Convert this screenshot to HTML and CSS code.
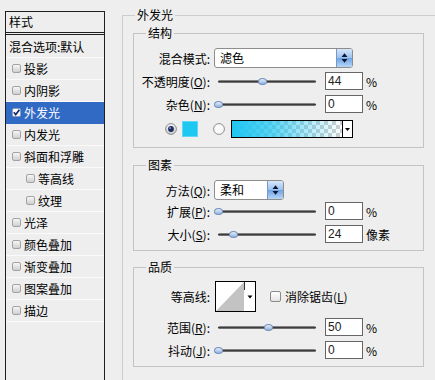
FILE: index.html
```html
<!DOCTYPE html>
<html lang="zh-CN">
<head>
<meta charset="utf-8">
<title>图层样式 - 外发光</title>
<link rel="stylesheet" href="styles.css">
</head>
<body>
<div class="dialog">
  <div class="styles-list">
    <div class="list-head">样式</div>
    <div class="list-row blend">混合选项:默认</div>
    <div class="list-row"><span class="cb"></span>投影</div>
    <div class="list-row"><span class="cb"></span>内阴影</div>
    <div class="list-row sel"><span class="cb checked"><svg width="7" height="7" viewBox="0 0 7 7"><path d="M0.8 3.2 L2.7 5.6 L6.4 0.8" fill="none" stroke="#1b2d6b" stroke-width="1.7"/></svg></span>外发光</div>
    <div class="list-row"><span class="cb"></span>内发光</div>
    <div class="list-row"><span class="cb"></span>斜面和浮雕</div>
    <div class="list-row sub"><span class="cb"></span>等高线</div>
    <div class="list-row sub"><span class="cb"></span>纹理</div>
    <div class="list-row"><span class="cb"></span>光泽</div>
    <div class="list-row"><span class="cb"></span>颜色叠加</div>
    <div class="list-row"><span class="cb"></span>渐变叠加</div>
    <div class="list-row"><span class="cb"></span>图案叠加</div>
    <div class="list-row"><span class="cb"></span>描边</div>
  </div>

  <fieldset class="outer">
    <legend>外发光</legend>

    <fieldset class="inner struct">
      <legend>结构</legend>
      <div class="row h20">
        <span class="lbl">混合模式:</span>
        <div class="select wide"><span class="val">滤色</span><span class="spin"><svg width="7" height="12" viewBox="0 0 7 12"><path d="M0.5 5 L3.5 1.2 L6.5 5Z M0.5 7 L3.5 10.8 L6.5 7Z" fill="#0d1733"/></svg></span></div>
      </div>
      <div class="row mt4">
        <span class="lbl">不透明度(<u>O</u>):</span>
        <div class="slider"><div class="track"><span class="thumb" style="left:45%"></span></div></div>
        <span class="num">44</span><span class="unit">%</span>
      </div>
      <div class="row mt5">
        <span class="lbl">杂色(<u>N</u>):</span>
        <div class="slider"><div class="track"><span class="thumb" style="left:0%"></span></div></div>
        <span class="num">0</span><span class="unit">%</span>
      </div>
      <div class="row mt7 colors">
        <span class="radio"><svg width="12" height="12" viewBox="0 0 12 12"><defs><linearGradient id="rg" x1="0" y1="0" x2="0" y2="1"><stop offset="0" stop-color="#f6f6f6"/><stop offset="1" stop-color="#c9c9c9"/></linearGradient></defs><circle cx="6" cy="6" r="5.4" fill="url(#rg)" stroke="#8d8d8d"/><circle cx="6" cy="6" r="2.9" fill="#1c2b5e"/><circle cx="5.2" cy="5.1" r="1" fill="#7f93c4"/></svg></span>
        <span class="swatch"></span>
        <span class="radio r2"><svg width="12" height="12" viewBox="0 0 12 12"><circle cx="6" cy="6" r="5.4" fill="#fafafa" stroke="#8d8d8d"/></svg></span>
        <div class="gradient"><span class="gbar"></span><span class="garrow"><svg width="5" height="3" viewBox="0 0 5 3"><path d="M0 0H5L2.5 3Z" fill="#000"/></svg></span></div>
      </div>
    </fieldset>

    <fieldset class="inner elements">
      <legend>图素</legend>
      <div class="row h20">
        <span class="lbl">方法(<u>Q</u>):</span>
        <div class="select narrow"><span class="val">柔和</span><span class="spin"><svg width="7" height="12" viewBox="0 0 7 12"><path d="M0.5 5 L3.5 1.2 L6.5 5Z M0.5 7 L3.5 10.8 L6.5 7Z" fill="#0d1733"/></svg></span></div>
      </div>
      <div class="row mt2">
        <span class="lbl">扩展(<u>P</u>):</span>
        <div class="slider"><div class="track"><span class="thumb" style="left:0%"></span></div></div>
        <span class="num">0</span><span class="unit">%</span>
      </div>
      <div class="row mt5">
        <span class="lbl">大小(<u>S</u>):</span>
        <div class="slider"><div class="track"><span class="thumb" style="left:15%"></span></div></div>
        <span class="num">24</span><span class="unit">像素</span>
      </div>
    </fieldset>

    <fieldset class="inner quality">
      <legend>品质</legend>
      <div class="row h31">
        <span class="lbl">等高线:</span>
        <div class="contour"><svg width="39" height="29" viewBox="0 0 39 29"><rect width="39" height="29" fill="#fff"/><polygon points="0,29 28,0 28,29" fill="#c3c3c3"/><line x1="28.5" y1="0" x2="28.5" y2="8" stroke="#333" stroke-width="1"/><path d="M31.5 13.5 H36.5 L34 16.5Z" fill="#000"/></svg></div>
        <span class="check"></span>
        <span class="check-label">消除锯齿(<u>L</u>)</span>
      </div>
      <div class="row mt6">
        <span class="lbl">范围(<u>R</u>):</span>
        <div class="slider"><div class="track"><span class="thumb" style="left:51%"></span></div></div>
        <span class="num">50</span><span class="unit">%</span>
      </div>
      <div class="row mt5">
        <span class="lbl">抖动(<u>J</u>):</span>
        <div class="slider"><div class="track"><span class="thumb" style="left:0%"></span></div></div>
        <span class="num">0</span><span class="unit">%</span>
      </div>
    </fieldset>
  </fieldset>
</div>
</body>
</html>
```

FILE: styles.css
```css
* { box-sizing: border-box; }
html, body { margin: 0; padding: 0; }
body {
  width: 435px;
  height: 380px;
  overflow: hidden;
  background: #eeeeee;
  font-family: "Noto Sans CJK SC", "Noto Sans", sans-serif;
  font-size: 12px;
  color: #000;
}
u { text-decoration: underline; text-underline-offset: 1px; }

.dialog {
  display: flex;
  align-items: flex-start;
  height: 380px;
  padding-left: 5px;
}

/* ---------- left styles list ---------- */
.styles-list {
  flex: none;
  margin-top: 11px;
  width: 100px;
  height: 369px;
  border: 1px solid #1e1e1e;
  border-bottom: 0;
}
.list-head {
  height: 23px;
  line-height: 20px;
  padding-left: 3px;
  border-bottom: 3px double #1e1e1e;
}
.list-row {
  height: 22px;
  display: flex;
  align-items: center;
  padding-left: 6px;
  border-bottom: 1px solid #fafafa;
  white-space: nowrap;
}
.list-row.blend { height: 23px; padding-left: 3px; }
.list-row.sub { padding-left: 20px; }
.list-row.sel { background: #316ac5; color: #fff; border-bottom-color: #316ac5; }
.cb {
  flex: none;
  width: 9px;
  height: 9px;
  margin-right: 3px;
  border: 1px solid #a3a3a3;
  border-radius: 2px;
  background: linear-gradient(#f6f6f6, #cfcfcf);
}
.cb.checked {
  border-color: #8ea0bd;
  background: #fff;
  display: flex;
}

/* ---------- right panel ---------- */
fieldset { margin: 0; min-inline-size: 0; }
legend { padding: 0 2px; line-height: 14px; }

.outer {
  flex: none;
  margin: 8px 0 0 17px;
  padding: 0 0 14px 10px;
  width: 330px;
  border: 1px solid #cdcdcd;
  border-bottom: 0;
}
.outer > legend { margin-left: 2px; }

.inner {
  width: 291px;
  padding: 8px 0 9px 0;
  border: 1px solid #c4c4c4;
}
.inner > legend { margin-left: 12px; }
.struct { margin-top: 4px; }
.elements { margin-top: 10px; padding-bottom: 7px; }
.quality { margin-top: 9px; padding: 7px 0 7px 0; }

.row {
  display: flex;
  align-items: center;
  height: 18px;
  white-space: nowrap;
}
.row.h20 { height: 20px; }
.row.h31 { height: 31px; }
.mt2 { margin-top: 2px; }
.mt4 { margin-top: 4px; }
.mt5 { margin-top: 5px; }
.mt6 { margin-top: 6px; }
.mt7 { margin-top: 7px; }

.lbl {
  flex: none;
  width: 76px;
  margin-right: 4px;
  text-align: right;
}

/* select */
.select {
  flex: none;
  display: flex;
  height: 20px;
  border: 1px solid #8d8d8d;
  border-radius: 3px;
  background: #fff;
  overflow: hidden;
}
.select.wide { width: 139px; }
.select.narrow { width: 70px; }
.select .val { flex: 1; padding-left: 5px; line-height: 18px; }
.spin {
  flex: none;
  width: 16px;
  display: flex;
  align-items: center;
  justify-content: center;
  border-left: 1px solid #7c98c2;
  background: linear-gradient(#d7e7fa, #9cc2ee 48%, #6ea4e6 52%, #b7d6f7);
}

/* slider */
.slider {
  flex: none;
  width: 107px;
  height: 18px;
  margin-right: 4px;
  padding: 0 5px 0 4px;
  display: flex;
  align-items: center;
}
.track {
  position: relative;
  flex: 1;
  height: 3px;
  border-radius: 2px;
  background: linear-gradient(#a8a8a8, #3c3c3c 50%, #8a8a8a);
}
.thumb {
  position: absolute;
  top: -2px;
  width: 9px;
  height: 7px;
  margin-left: -4px;
  border: 1px solid #7391bd;
  border-radius: 50% 50% 45% 45%;
  background: linear-gradient(#e4eefa, #93b3dc);
}

/* number box */
.num {
  flex: none;
  width: 38px;
  height: 18px;
  margin-right: 3px;
  padding-left: 2px;
  border: 1px solid #666;
  background: #fff;
  font-family: "Liberation Sans", Arial, sans-serif;
  font-size: 12px;
  line-height: 16px;
  color: #222;
}
.unit { font-size: 12px; }

/* colour row */
.colors { padding-left: 31px; }
.radio { flex: none; width: 12px; height: 12px; display: flex; }
.swatch {
  flex: none;
  width: 16px;
  height: 16px;
  margin-left: 5px;
  background: #1fc8f1;
  border: 1px solid #5fd6f4;
}
.r2 { margin-left: 15px; }
.gradient {
  flex: none;
  display: flex;
  width: 122px;
  height: 18px;
  margin-left: 6px;
  border: 1px solid #000;
  background: #fff;
}
.gbar {
  flex: 1;
  background:
    linear-gradient(to right, #1fc6f2 0%, rgba(31, 198, 242, 0.75) 35%, rgba(31, 198, 242, 0) 100%),
    conic-gradient(#cfcfcf 25%, #ffffff 0 50%, #cfcfcf 0 75%, #ffffff 0) 0 0 / 8px 8px;
}
.garrow {
  flex: none;
  width: 10px;
  border-left: 1px solid #000;
  display: flex;
  align-items: center;
  justify-content: center;
}

/* quality row */
.contour {
  flex: none;
  width: 41px;
  height: 31px;
  margin-left: 1px;
  border: 1px solid #000;
  display: flex;
}
.check {
  flex: none;
  width: 11px;
  height: 11px;
  margin-left: 14px;
  margin-right: 4px;
  border: 1px solid #8a8a8a;
  border-radius: 2px;
  background: linear-gradient(#ffffff, #e4e4e4);
}
```
